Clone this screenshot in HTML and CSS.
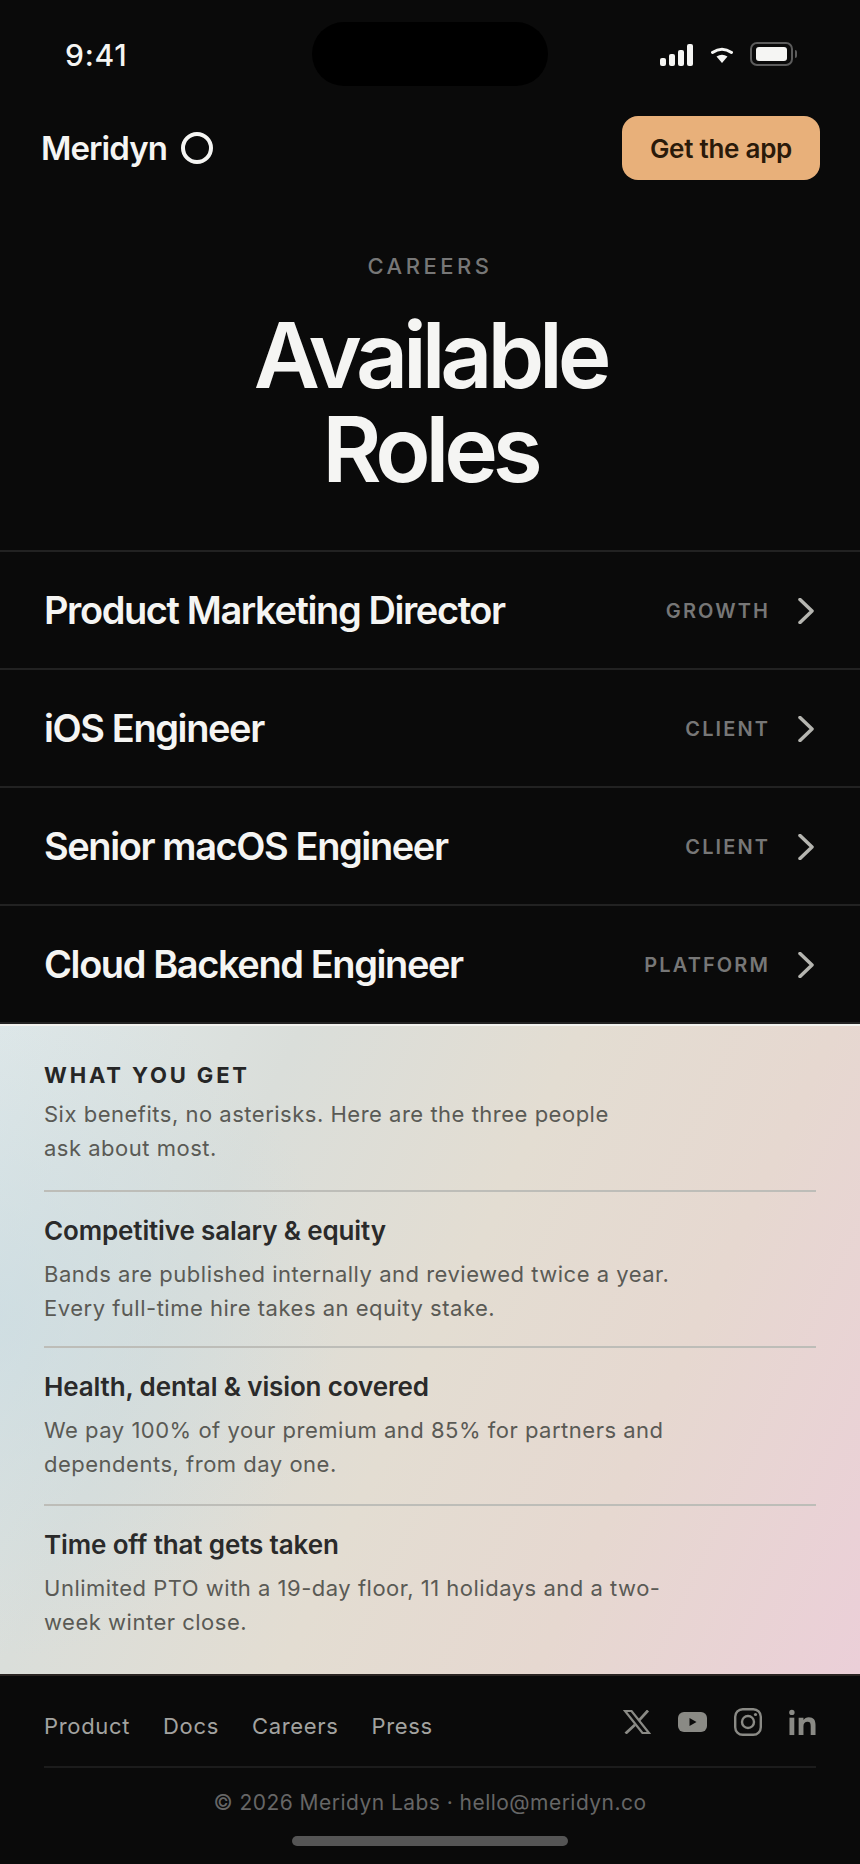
FILE: index.html
```html
<!DOCTYPE html>
<html lang="en">
<head>
    <meta charset="UTF-8">
    <meta name="viewport" content="width=device-width, initial-scale=1.0">
    <title>Meridyn Careers</title>
    <link rel="stylesheet" href="styles.css">
</head>
<body>
    <div class="page">
        <div class="status-bar">
            <span class="time">9:41</span>
            <div class="island"></div>
            <div class="status-icons">
                <svg width="33" height="22" viewBox="0 0 33 22" fill="#f5f5f3">
                    <rect x="0" y="14" width="6" height="8" rx="2"/>
                    <rect x="9" y="10" width="6" height="12" rx="2"/>
                    <rect x="18" y="6" width="6" height="16" rx="2"/>
                    <rect x="27" y="0" width="6" height="22" rx="2"/>
                </svg>
                <svg class="wifi" width="22" height="16" viewBox="0 0 22 16">
                    <path d="M1.500 5.500 Q11 -1 20.500 5.500" fill="none" stroke="#f5f5f3" stroke-width="3" stroke-linecap="round"/>
                    <path d="M5.500 9.500 Q11 6 16.500 9.500 L11 16 Z" fill="#f5f5f3"/>
                </svg>
                <div class="battery"><div class="battery-fill"></div></div>
            </div>
        </div>

        <header class="top-nav">
            <div class="logo">Meridyn <span class="logo-ring"></span></div>
            <a class="get-app">Get the app</a>
        </header>

        <section class="hero">
            <div class="eyebrow">CAREERS</div>
            <h1>Available<br>Roles</h1>
        </section>

        <div class="roles">
            <div class="role">
                <span class="role-title">Product Marketing Director</span>
                <span class="role-team">GROWTH</span>
                <svg class="chevron" width="16" height="26" viewBox="0 0 16 26" fill="none"><path d="M2 1.500 L14 13 L2 24.500"/></svg>
            </div>
            <div class="role">
                <span class="role-title">iOS Engineer</span>
                <span class="role-team">CLIENT</span>
                <svg class="chevron" width="16" height="26" viewBox="0 0 16 26" fill="none"><path d="M2 1.500 L14 13 L2 24.500"/></svg>
            </div>
            <div class="role">
                <span class="role-title">Senior macOS Engineer</span>
                <span class="role-team">CLIENT</span>
                <svg class="chevron" width="16" height="26" viewBox="0 0 16 26" fill="none"><path d="M2 1.500 L14 13 L2 24.500"/></svg>
            </div>
            <div class="role">
                <span class="role-title">Cloud Backend Engineer</span>
                <span class="role-team">PLATFORM</span>
                <svg class="chevron" width="16" height="26" viewBox="0 0 16 26" fill="none"><path d="M2 1.500 L14 13 L2 24.500"/></svg>
            </div>
        </div>

        <section class="benefits">
            <div class="benefits-head">
                <h2>WHAT YOU GET</h2>
                <p>Six benefits, no asterisks. Here are the three people<br>ask about most.</p>
            </div>
            <div class="benefit">
                <h3>Competitive salary &amp; equity</h3>
                <p>Bands are published internally and reviewed twice a year.<br>Every full-time hire takes an equity stake.</p>
            </div>
            <div class="benefit">
                <h3>Health, dental &amp; vision covered</h3>
                <p>We pay 100% of your premium and 85% for partners and<br>dependents, from day one.</p>
            </div>
            <div class="benefit">
                <h3>Time off that gets taken</h3>
                <p>Unlimited PTO with a 19-day floor, 11 holidays and a two-<br>week winter close.</p>
            </div>
        </section>

        <footer class="footer">
            <div class="footer-top">
                <nav class="footer-links">
                    <a>Product</a>
                    <a>Docs</a>
                    <a>Careers</a>
                    <a>Press</a>
                </nav>
                <div class="socials">
                    <svg width="28" height="24" viewBox="0 0 28 24" fill="none" stroke="#8a8a85">
                        <path d="M2 1 H8.500 L26 23 H19.500 Z" stroke-width="2.200"/>
                        <path d="M25 0.500 L15.800 10.600 M12 14.800 L2.500 23.500" stroke-width="2.800"/>
                    </svg>
                    <svg width="29" height="20" viewBox="0 0 29 20">
                        <rect width="29" height="20" rx="6" fill="#8a8a85"/>
                        <path d="M11.500 6 L18.500 10 L11.500 14 Z" fill="#0a0a0a"/>
                    </svg>
                    <svg width="28" height="28" viewBox="0 0 28 28" fill="none" stroke="#8a8a85" stroke-width="2.400">
                        <rect x="1.200" y="1.200" width="25.600" height="25.600" rx="7.500"/>
                        <circle cx="14" cy="14" r="6"/>
                        <circle cx="21.500" cy="6.500" r="1.600" fill="#8a8a85" stroke="none"/>
                    </svg>
                    <svg width="27" height="27" viewBox="0 0 28 28" fill="#8a8a85">
                        <circle cx="3" cy="3.500" r="2.800"/>
                        <rect x="0.500" y="9" width="5" height="18"/>
                        <path d="M10 9 H15 V11.500 C16 10 18 8.600 20.500 8.600 C25.500 8.600 27.500 11.500 27.500 16.500 V27 H22.500 V17.500 C22.500 14.800 21.800 13.200 19.300 13.200 C16.500 13.200 15 15 15 17.800 V27 H10 Z"/>
                    </svg>
                </div>
            </div>
            <div class="copyright">© 2026 Meridyn Labs · hello@meridyn.co</div>
            <div class="home-bar"></div>
        </footer>
    </div>
</body>
</html>
```

FILE: styles.css
```css
* {
    margin: 0;
    padding: 0;
    box-sizing: border-box;
}

body {
    font-family: 'Inter', 'Liberation Sans', sans-serif;
    background: #0a0a0a;
    color: #f5f5f3;
}

.page {
    width: 860px;
    height: 1864px;
    display: flex;
    flex-direction: column;
    background: #0a0a0a;
}

/* status bar */
.status-bar {
    height: 116px;
    padding: 22px 65px 0;
    display: grid;
    grid-template-columns: 1fr auto 1fr;
    align-items: start;
}

.time {
    font-size: 30px;
    font-weight: 500;
    line-height: 64px;
    letter-spacing: 0.025em;
    margin-top: 1px;
}

.island {
    width: 236px;
    height: 64px;
    border-radius: 32px;
    background: #000;
}

.status-icons {
    justify-self: end;
    display: flex;
    align-items: center;
    gap: 17px;
    margin: 20px 2px 0 0;
}

.status-icons svg {
    margin-top: 2px;
}

.wifi {
    margin-left: 1px;
}

.battery {
    width: 43px;
    height: 24px;
    border: 2px solid #5c5c5c;
    border-radius: 7px;
    padding: 3px 4px;
    position: relative;
}

.battery::after {
    content: "";
    position: absolute;
    right: -6px;
    top: 6px;
    width: 2px;
    height: 8px;
    border-radius: 0 2px 2px 0;
    background: #5c5c5c;
}

.battery-fill {
    width: 100%;
    height: 100%;
    background: #f5f5f3;
    border-radius: 3px;
}

/* nav */
.top-nav {
    height: 64px;
    padding: 0 40px 0 41px;
    display: flex;
    justify-content: space-between;
    align-items: center;
}

.logo {
    font-size: 33px;
    font-weight: 600;
    letter-spacing: -0.028em;
    display: flex;
    align-items: center;
    gap: 14px;
}

.logo-ring {
    width: 32px;
    height: 32px;
    border: 4px solid #f5f5f3;
    border-radius: 50%;
}

.get-app {
    width: 198px;
    height: 64px;
    border-radius: 16px;
    background: #e8b07a;
    color: #2a1a0a;
    font-size: 26px;
    font-weight: 600;
    letter-spacing: -0.01em;
    display: flex;
    align-items: center;
    justify-content: center;
}

/* hero */
.hero {
    height: 370px;
    padding-top: 72px;
    text-align: center;
}

.eyebrow {
    font-size: 22px;
    font-weight: 500;
    line-height: 28px;
    letter-spacing: 0.16em;
    color: #777;
}

h1 {
    margin-top: 28px;
    font-size: 91px;
    font-weight: 600;
    line-height: 94px;
    letter-spacing: -0.057em;
    color: #f5f5f3;
}

/* roles */
.roles {
    border-bottom: 2px solid #222;
}

.role {
    height: 118px;
    padding: 0 46px 0 44px;
    display: flex;
    align-items: center;
    border-top: 2px solid #222;
}

.role-title {
    flex: 1;
    font-size: 38px;
    font-weight: 600;
    letter-spacing: -0.037em;
    color: #f5f5f3;
}

.role-team {
    font-size: 20px;
    font-weight: 600;
    letter-spacing: 0.105em;
    color: #777;
    margin: 2px 28px 0 0;
}

.chevron {
    margin-top: 2px;
    stroke: #b5b5b0;
    stroke-width: 3.500;
    stroke-linecap: round;
    stroke-linejoin: round;
}

/* benefits */
.benefits {
    height: 650px;
    padding: 35px 44px 0;
    border-top: 2px solid #f2f2ee;
    background:
        radial-gradient(circle 340px at 0 45%, rgba(198, 218, 226, 0.6), rgba(198, 218, 226, 0)),
        linear-gradient(115deg, #dfe8e9 0%, #dadeda 26%, #e3ddd2 50%, #e6d8d0 72%, #ebcfd8 100%);
}

.benefits-head {
    padding-bottom: 25px;
}

h2 {
    font-size: 22px;
    font-weight: 700;
    line-height: 28px;
    letter-spacing: 0.13em;
    color: #262626;
    margin-bottom: 8px;
}

.benefits p {
    font-size: 22px;
    line-height: 34px;
    letter-spacing: 0.023em;
    color: #5a5a55;
}

.benefit {
    height: 156px;
    padding-top: 22px;
    border-top: 2px solid #bdbdb8;
}

.benefit + .benefit {
    height: 158px;
}

h3 {
    font-size: 26px;
    font-weight: 600;
    line-height: 34px;
    letter-spacing: -0.005em;
    color: #2a2a2a;
    margin-bottom: 9px;
}

/* footer */
.footer {
    flex: 1;
    padding: 0 44px;
    border-top: 2px solid #2a2422;
}

.footer-top {
    height: 92px;
    display: flex;
    justify-content: space-between;
    align-items: center;
    border-bottom: 2px solid #1c1c1c;
}

.footer-links {
    display: flex;
    gap: 33px;
    padding-top: 10px;
}

.footer-links a {
    font-size: 22px;
    letter-spacing: 0.03em;
    color: #a3a3a0;
}

.socials {
    display: flex;
    align-items: center;
    gap: 27px;
    padding-top: 2px;
}

.copyright {
    margin-top: 20px;
    text-align: center;
    font-size: 21px;
    line-height: 30px;
    letter-spacing: 0.022em;
    color: #666;
}

.home-bar {
    width: 276px;
    height: 10px;
    margin: 18px auto 0;
    border-radius: 5px;
    background: #555;
}
```
